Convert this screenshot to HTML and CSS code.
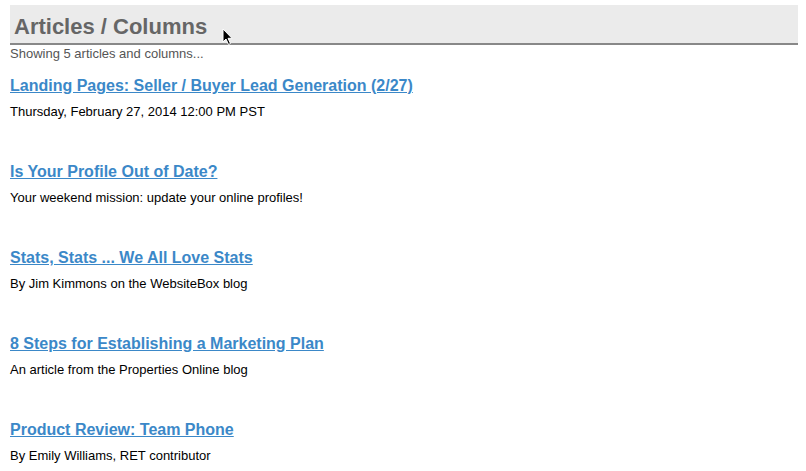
FILE: index.html
```html
<!DOCTYPE html>
<html>
<head>
<meta charset="utf-8">
<link rel="stylesheet" href="styles.css">
</head>
<body>
<div class="page">
  <div class="header">
    <h1 class="title">Articles / Columns</h1>
    <svg class="cursor" width="12" height="18" viewBox="0 0 12 18"><path d="M1 1 L1 14 L4 11 L6.5 16.5 L8.5 15.5 L6 10.3 L10 10.3 Z" fill="#000" stroke="#fff" stroke-width="1"/></svg>
  </div>
  <div class="count">Showing 5 articles and columns...</div>
  <ul class="list">
    <li class="item"><a class="link" href="#">Landing Pages: Seller / Buyer Lead Generation (2/27)</a><p class="desc">Thursday, February 27, 2014 12:00 PM PST</p></li>
    <li class="item"><a class="link" href="#">Is Your Profile Out of Date?</a><p class="desc">Your weekend mission: update your online profiles!</p></li>
    <li class="item"><a class="link" href="#">Stats, Stats ... We All Love Stats</a><p class="desc">By Jim Kimmons on the WebsiteBox blog</p></li>
    <li class="item"><a class="link" href="#">8 Steps for Establishing a Marketing Plan</a><p class="desc">An article from the Properties Online blog</p></li>
    <li class="item"><a class="link" href="#">Product Review: Team Phone</a><p class="desc">By Emily Williams, RET contributor</p></li>
  </ul>
</div>
</body>
</html>
```

FILE: styles.css
```css
html, body { margin: 0; padding: 0; background: #fff; }
body { font-family: "Liberation Sans", Arial, sans-serif; }
.page { padding: 5px 8px 0 10px; }
.header {
  position: relative;
  background: #ebebeb;
  border-bottom: 2px solid #888;
  height: 38px;
  box-sizing: content-box;
}
.title {
  margin: 0;
  padding: 10px 0 0 4px;
  font-size: 22px;
  font-weight: bold;
  color: #666;
  line-height: 24px;
}
.cursor { position: absolute; left: 212px; top: 23px; }
.count { font-size: 13px; color: #555; margin-top: 1px; line-height: 15px; }
.list { list-style: none; margin: 0; padding: 0; }
.item { height: 86px; }
.item:last-child { height: auto; }
.item:first-child { margin-top: 15px; }
.link {
  display: inline-block;
  font-size: 16px;
  font-weight: bold;
  color: #3b88c8;
  text-decoration: underline;
  line-height: 20px;
}
.desc { margin: 8px 0 0; font-size: 13px; color: #000; line-height: 16px; }
```
